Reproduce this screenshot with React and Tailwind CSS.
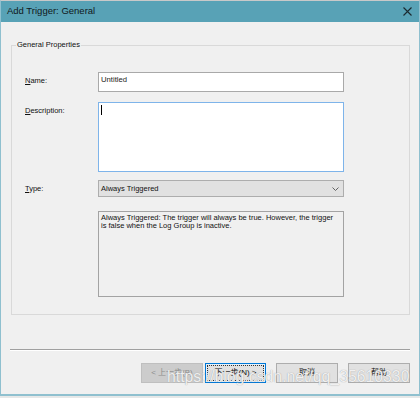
import React from "react";

const font = { fontFamily: '"Liberation Sans", "Noto Sans CJK SC", Arial, sans-serif' };

function Label({ k, rest }) {
  return (
    <div className="pt-[4px] text-[7.5px] leading-[10px] text-[#111]">
      <span className="underline">{k}</span>
      {rest}
    </div>
  );
}

function Button({ children, kind }) {
  if (kind === "disabled") {
    return (
      <div className="w-[62px] h-[20px] flex items-center justify-center bg-[#cccccc] border border-[#bfbfbf] text-[8px] text-[#8d8d8d]">
        {children}
      </div>
    );
  }
  if (kind === "default") {
    return (
      <div className="w-[61px] h-[20px] p-[1px] bg-[#e5f1fb] border border-[#0078d7]">
        <div className="w-full h-full flex items-center justify-center border border-dotted border-[#333] bg-[#e1e1e1] text-[8px] text-[#111]">
          {children}
        </div>
      </div>
    );
  }
  return (
    <div className="w-[62px] h-[20px] flex items-center justify-center bg-[#e1e1e1] border border-[#adadad] text-[8px] text-[#111]">
      {children}
    </div>
  );
}

export default function App() {
  return (
    <div className="w-[420px] h-[398px] bg-[#e6e8e8] overflow-hidden" style={font}>
      <div className="w-[420px] h-[396px] flex flex-col border-x border-b-2 border-[#8fc0cf] border-t border-t-[#c9c9c9] bg-[#f0f0f0] relative">
        {/* title bar */}
        <div className="h-[21px] shrink-0 bg-[#58a2b6] flex items-center justify-between pl-[6px] pr-[7px]">
          <span className="text-[9.5px] text-[#101820]">Add Trigger: General</span>
          <svg width="9" height="9" viewBox="0 0 9 9">
            <path d="M0.5 0.5 L8.5 8.5 M8.5 0.5 L0.5 8.5" stroke="#1b2a30" strokeWidth="1.1" />
          </svg>
        </div>

        {/* group box */}
        <div className="mt-[23px] ml-[10px] w-[399px] h-[270px] border border-[#d9d9d9] relative pt-[26px] pl-[13px]">
          <span className="absolute left-[4px] top-[-6px] bg-[#f0f0f0] px-[1px] text-[7.5px] leading-[10px] text-[#111]">
            General Properties
          </span>
          <div className="grid grid-cols-[73px_246px] gap-y-[10px]">
            <Label k="N" rest="ame:" />
            <div className="h-[20px] bg-white border border-[#a9a9a9] px-[2px] text-[7.7px] leading-[14px] text-[#222]">
              Untitled
            </div>

            <Label k="D" rest="escription:" />
            <div className="h-[70px] bg-white border border-[#7eb4ea] pl-[2px] pt-[2px]">
              <div className="w-[1px] h-[10px] bg-black" />
            </div>
          </div>
          <div className="grid grid-cols-[73px_246px] mt-[8px]">
            <Label k="T" rest="ype:" />
            <div className="h-[17px] bg-[#e1e1e1] border border-[#adadad] flex items-center justify-between pl-[2px] pr-[4px]">
              <span className="text-[7.5px] text-[#111]">Always Triggered</span>
              <svg width="7" height="4" viewBox="0 0 7 4">
                <path d="M0.5 0.5 L3.5 3.5 L6.5 0.5" stroke="#555" strokeWidth="0.9" fill="none" />
              </svg>
            </div>
          </div>
          <div className="grid grid-cols-[73px_246px] mt-[14px]">
            <div />
            <div className="h-[86px] bg-[#f0f0f0] border border-[#a3a3a3] pl-[2px] pr-[7px] pt-[2px] text-[7.5px] leading-[8px] text-[#111]">
              Always Triggered: The trigger will always be true. However, the trigger is false when the Log Group is inactive.
            </div>
          </div>
        </div>

        {/* separator */}
        <div className="mt-[34px] ml-[9px] w-[400px] h-[2px] border-t border-[#a0a0a0] border-b border-b-white" />

        {/* buttons */}
        <div className="mt-[12px] flex justify-end pr-[9px]">
          <div className="flex gap-[2px]">
            <Button kind="disabled">&lt; 上一步(B)</Button>
            <Button kind="default">下一步(N) &gt;</Button>
          </div>
          <div className="ml-[10px] flex gap-[10px]">
            <Button>取消</Button>
            <Button>帮助</Button>
          </div>
        </div>

        {/* watermark */}
        <span
          className="absolute left-[166px] top-[366px] text-[15.8px] leading-[20px] text-white/85 [text-shadow:0_0_1px_#8a8a8a] pointer-events-none"
          style={{ fontFamily: '"Liberation Sans", Arial, sans-serif' }}
        >
          https://blog.csdn.net/qq_35610330
        </span>
      </div>
    </div>
  );
}
